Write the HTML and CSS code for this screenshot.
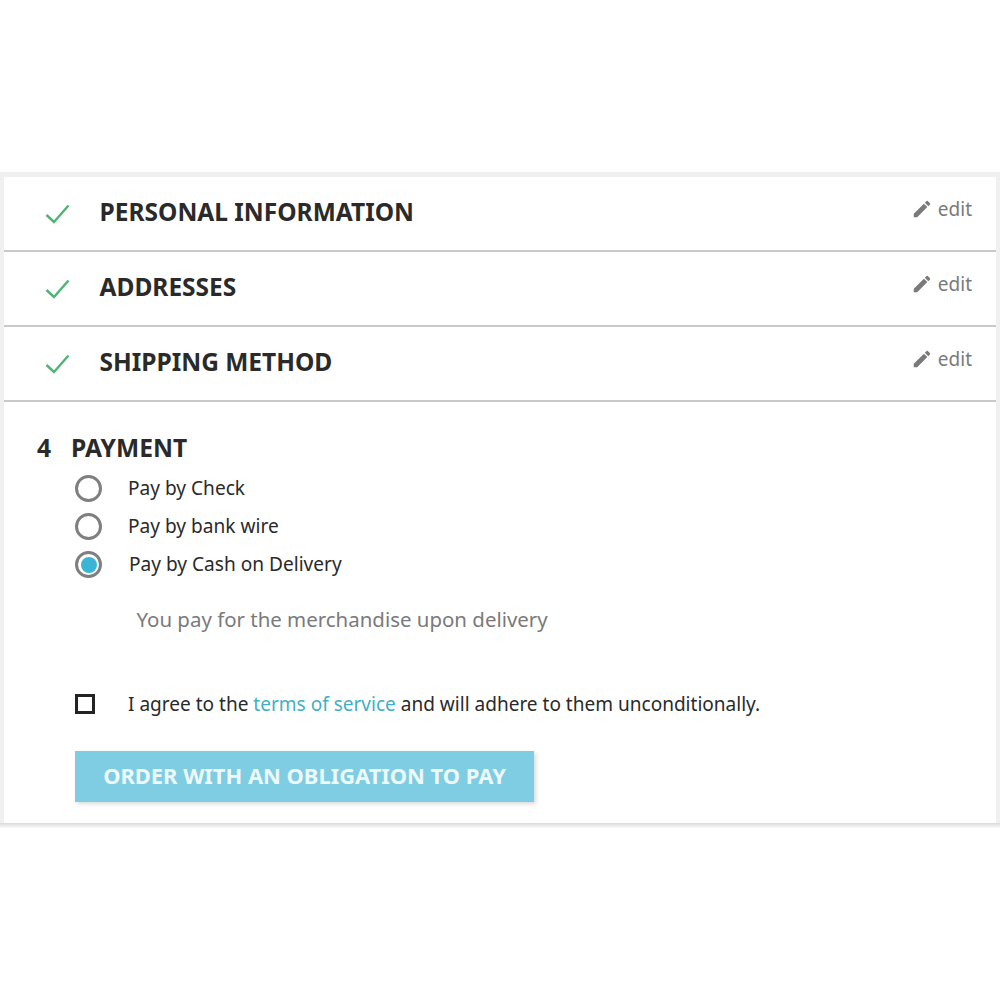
FILE: index.html
```html
<!DOCTYPE html>
<html lang="en">
<head>
    <meta charset="UTF-8">
    <meta name="viewport" content="width=device-width, initial-scale=1.0">
    <title>Checkout</title>
    <link rel="stylesheet" href="styles.css">
</head>
<body>
<div class="frame">
<div class="checkout">
    <!-- Finished steps -->
    <div class="step">
        <svg class="check" viewBox="0 0 24 20"><path d="M1 11 L8.500 18 L23 1.500"/></svg>
        <h2>PERSONAL INFORMATION</h2>
        <a class="edit"><svg viewBox="0 0 24 24"><path d="M3 17.250V21h3.750L17.810 9.940l-3.750-3.750L3 17.250zM20.710 7.040a1 1 0 0 0 0-1.410l-2.340-2.340a1 1 0 0 0-1.410 0l-1.830 1.830 3.750 3.750 1.830-1.830z"/></svg>edit</a>
    </div>
    <div class="step">
        <svg class="check" viewBox="0 0 24 20"><path d="M1 11 L8.500 18 L23 1.500"/></svg>
        <h2>ADDRESSES</h2>
        <a class="edit"><svg viewBox="0 0 24 24"><path d="M3 17.250V21h3.750L17.810 9.940l-3.750-3.750L3 17.250zM20.710 7.040a1 1 0 0 0 0-1.410l-2.340-2.340a1 1 0 0 0-1.410 0l-1.830 1.830 3.750 3.750 1.830-1.830z"/></svg>edit</a>
    </div>
    <div class="step">
        <svg class="check" viewBox="0 0 24 20"><path d="M1 11 L8.500 18 L23 1.500"/></svg>
        <h2>SHIPPING METHOD</h2>
        <a class="edit"><svg viewBox="0 0 24 24"><path d="M3 17.250V21h3.750L17.810 9.940l-3.750-3.750L3 17.250zM20.710 7.040a1 1 0 0 0 0-1.410l-2.340-2.340a1 1 0 0 0-1.410 0l-1.830 1.830 3.750 3.750 1.830-1.830z"/></svg>edit</a>
    </div>

    <!-- Current step -->
    <div class="payment">
        <h2 class="payment-title"><span class="step-number">4</span>PAYMENT</h2>
        <div class="option"><span class="radio"></span><span>Pay by Check</span></div>
        <div class="option"><span class="radio"></span><span>Pay by bank wire</span></div>
        <div class="option option-selected"><span class="radio radio-on"></span><span>Pay by Cash on Delivery</span></div>
        <p class="note">You pay for the merchandise upon delivery</p>
        <div class="terms">
            <span class="checkbox"></span>
            <span>I agree to the <a class="terms-link">terms of service</a> and will adhere to them unconditionally.</span>
        </div>
        <button class="order" type="button">ORDER WITH AN OBLIGATION TO PAY</button>
    </div>
</div>
</div>
</body>
</html>
```

FILE: styles.css
```css
/* Page */
body {
    margin: 0;
    padding: 172px 0 0;
    background-color: #fff;
    font-family: "Noto Sans", sans-serif;
    color: #2a2a2a;
}

/* Soft band round the card, darker along the bottom edge */
.frame {
    padding: 5px 4px;
    background: linear-gradient(to bottom, #f0f0f0 651px, #d9d9d9 651px, #fafafa 656px);
}

.checkout {
    background-color: #fff;
    height: 646px;
}

/* Finished steps */
.step {
    display: flex;
    align-items: center;
    height: 73px;
    border-bottom: 2px solid #c9c9c9;
    padding: 0 24px 0 41px;
}

.step h2 {
    margin: 0 0 3px 0.500px;
    font-size: 24.500px;
    font-weight: 700;
    line-height: 32px;
}

.check {
    width: 25px;
    height: 20px;
    margin: 1px 29px 0 0;
    flex-shrink: 0;
}

.check path {
    fill: none;
    stroke: #4fb573;
    stroke-width: 2.400;
}

.edit {
    display: flex;
    align-items: center;
    gap: 5px;
    margin: 0 0 10px auto;
    font-size: 19px;
    color: #7a7a7a;
}

.edit svg {
    width: 22px;
    height: 22px;
    fill: #7a7a7a;
}

/* Payment step */
.payment {
    padding: 30px 0 0 33px;
}

.payment-title {
    margin: 0 0 5px 0;
    font-size: 24.600px;
    font-weight: 700;
    line-height: 32px;
}

.step-number {
    display: inline-block;
    width: 34px;
}

.option {
    display: flex;
    align-items: center;
    gap: 26px;
    height: 38px;
    margin-left: 38px;
    font-size: 19.100px;
}

.option-selected {
    gap: 27px;
}

.radio {
    box-sizing: border-box;
    width: 27px;
    height: 27px;
    border: 3px solid #7f7f7f;
    border-radius: 50%;
    flex-shrink: 0;
}

.radio-on {
    background-color: #3ab5d6;
    background-clip: content-box;
    padding: 2.500px;
}

.note {
    margin: 22px 0 0 99.500px;
    font-size: 20.450px;
    line-height: 28px;
    color: #7a7a7a;
}

.terms {
    display: flex;
    align-items: center;
    gap: 33px;
    margin: 57px 0 0 38px;
    height: 28px;
    font-size: 19.050px;
}

.checkbox {
    box-sizing: border-box;
    width: 20px;
    height: 20px;
    border: 3px solid #232323;
}

.terms-link {
    color: #3fb0c6;
}

.order {
    display: block;
    width: 459px;
    height: 51px;
    margin: 33px 0 0 38px;
    padding: 0 0 2px 0;
    border: none;
    background-color: #7fcde2;
    box-shadow: 2px 2px 4px rgba(0, 0, 0, 0.15);
    color: #eef9fc;
    font-family: "Noto Sans", sans-serif;
    font-size: 21.900px;
    font-weight: 700;
}
```
